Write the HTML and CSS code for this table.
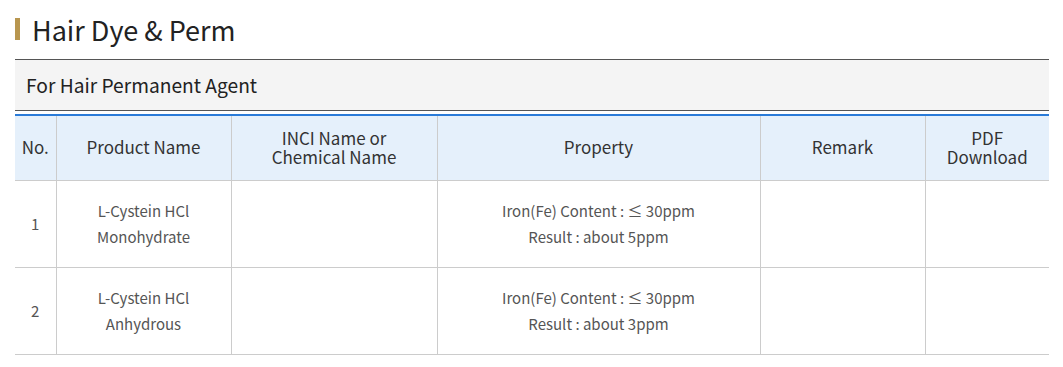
FILE: index.html
```html
<!DOCTYPE html>
<html>
<head>
<meta charset="utf-8">
<link rel="stylesheet" href="styles.css">
</head>
<body>
<div class="wrap">
  <h2 class="title"><span class="bar"></span>Hair Dye &amp; Perm</h2>
  <div class="section">For Hair Permanent Agent</div>
  <table class="grid">
    <colgroup>
      <col class="c-no"><col class="c-name"><col class="c-inci"><col class="c-prop"><col class="c-remark"><col class="c-pdf">
    </colgroup>
    <thead>
      <tr>
        <th>No.</th>
        <th>Product Name</th>
        <th>INCI Name or<br>Chemical Name</th>
        <th>Property</th>
        <th>Remark</th>
        <th>PDF<br>Download</th>
      </tr>
    </thead>
    <tbody>
      <tr>
        <td>1</td>
        <td>L-Cystein HCl<br>Monohydrate</td>
        <td></td>
        <td>Iron(Fe) Content : ≤ 30ppm<br>Result : about 5ppm</td>
        <td></td>
        <td></td>
      </tr>
      <tr>
        <td>2</td>
        <td>L-Cystein HCl<br>Anhydrous</td>
        <td></td>
        <td>Iron(Fe) Content : ≤ 30ppm<br>Result : about 3ppm</td>
        <td></td>
        <td></td>
      </tr>
    </tbody>
  </table>
</div>
</body>
</html>
```

FILE: styles.css
```css
* { box-sizing: border-box; }
html, body { margin: 0; padding: 0; background: #fff; }
body { font-family: "Noto Sans CJK KR", "Noto Sans", sans-serif; color: #222; }
.wrap { width: 1034px; margin-left: 15px; }
.title {
  margin: 0;
  height: 59px;
  display: flex;
  align-items: center;
  font-size: 27px;
  font-weight: 400;
  color: #222;
  padding-bottom: 1px;
}
.bar {
  display: inline-block;
  width: 5px;
  height: 22px;
  background: #b8964f;
  margin-right: 12px;
}
.section {
  height: 52px;
  border-top: 1px solid #555;
  border-bottom: 1px solid #555;
  background: #f4f4f4;
  font-size: 19.2px;
  padding-left: 11px;
  padding-bottom: 1px;
  display: flex;
  align-items: center;
  color: #222;
}
.grid {
  width: 100%;
  margin-top: 3px;
  border-collapse: collapse;
  table-layout: fixed;
  border-top: 2px solid #2a7bd8;
}
.c-no { width: 41px; }
.c-name { width: 175px; }
.c-inci { width: 206px; }
.c-prop { width: 323px; }
.c-remark { width: 165px; }
.c-pdf { width: 124px; }
.grid th {
  background: #e5f0fb;
  height: 65px;
  font-size: 17px;
  font-weight: 400;
  line-height: 19px;
  color: #333;
  border-bottom: 1px solid #ccc;
  border-left: 1px solid #ccc;
  padding: 0 0 2px;
}
.grid td {
  height: 87px;
  font-size: 15px;
  line-height: 26px;
  color: #555;
  text-align: center;
  border-bottom: 1px solid #ccc;
  border-left: 1px solid #ccc;
  padding: 0;
}
.grid th:first-child, .grid td:first-child { border-left: none; }
```
